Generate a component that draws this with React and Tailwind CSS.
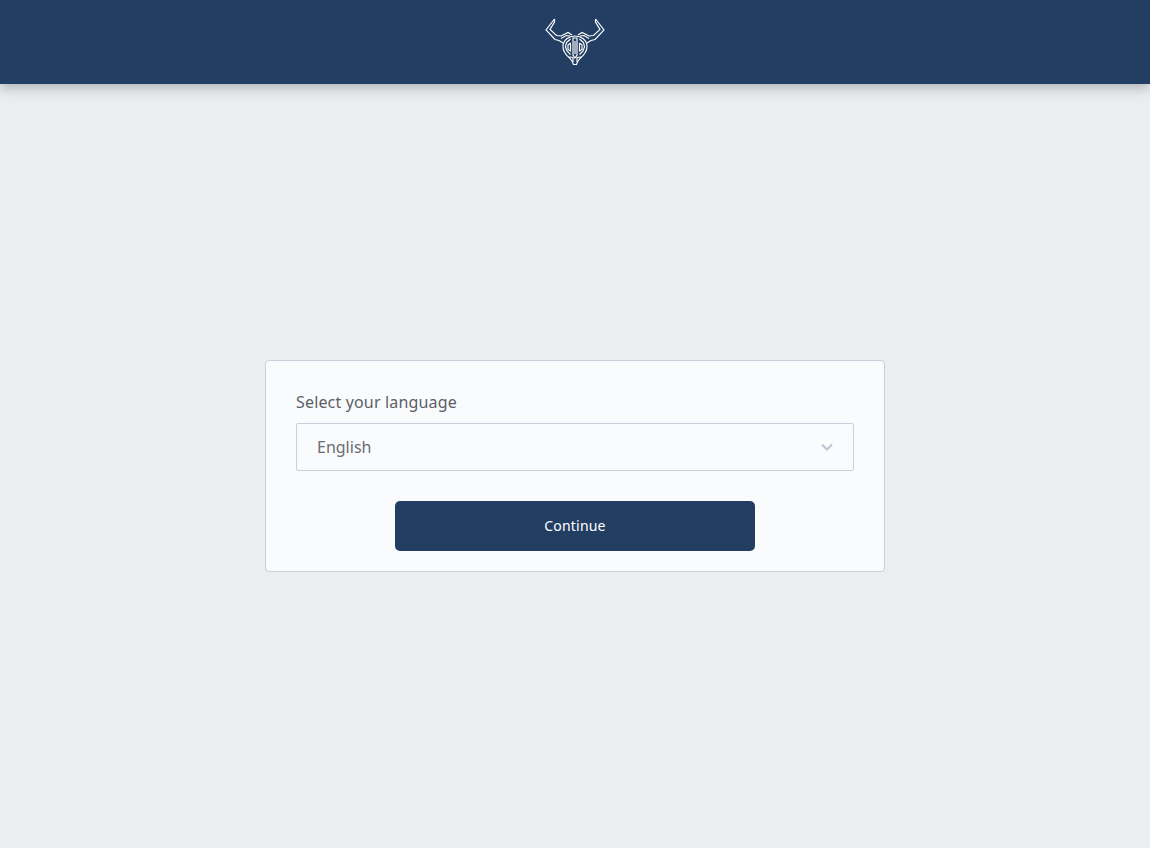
import React from "react";

function Logo() {
  return (
    <svg width="62" height="48" viewBox="0 0 62 48" fill="none" stroke="white" strokeWidth="1.15" strokeLinejoin="miter">
      {/* left horn */}
      <path d="M10.5 1 L2 12 L11 21.5 L15 22.5 L19 25" />
      <path d="M10.5 1 L10.5 4 L6 11.5 L12.5 17.5 L17 18 L24 14.5 L28 17" />
      <path d="M17 20.5 L22 17.5 L26 18" />
      {/* right horn */}
      <path d="M51.5 1 L60 12 L51 21.5 L47 22.5 L43 25" />
      <path d="M51.5 1 L51.5 4 L56 11.5 L49.5 17.5 L45 18 L38 14.5 L34 17" />
      <path d="M45 20.5 L40 17.5 L36 18" />
      {/* head */}
      <path d="M31 18 C25 18 19 22 19 28.5 C19 33 21.5 36.5 25 39.5 L28 43 L29.5 46.5 L32.5 46.5 L34 43 L37 39.5 C40.5 36.5 43 33 43 28.5 C43 22 37 18 31 18 Z" />
      {/* centre strands */}
      <path d="M29 20 L29 37 L31 40 L33 37 L33 20 Z" />
      <path d="M31 23 L31 36" />
      {/* lobes */}
      <path d="M26.5 21 L22.5 24.5 L21.5 29 L23 33 L26.5 36.5" />
      <path d="M35.5 21 L39.5 24.5 L40.5 29 L39 33 L35.5 36.5" />
      <path d="M26.5 25 L24 27 L24 31.5 L26.5 33 L26.5 25" />
      <path d="M35.5 25 L38 27 L38 31.5 L35.5 33 L35.5 25" />
      <path d="M25 39 L29 39.5 L29 44" />
      <path d="M37 39 L33 39.5 L33 44" />
    </svg>
  );
}

export default function App() {
  return (
    <div className="min-h-[848px] flex flex-col bg-[#eaeef1] font-['Noto_Sans','Open_Sans',sans-serif]">
      <header className="h-[84px] shrink-0 bg-[#233e63] flex items-center justify-center shadow-[0_4px_12px_rgba(0,0,0,0.25)]">
        <Logo />
      </header>
      <main className="flex-1 flex items-center justify-center">
        <div className="w-[620px] h-[212px] bg-[#f9fbfd] border border-[#c8d0da] rounded-[4px] px-[30px] pt-[30px] flex flex-col">
          <label className="text-base leading-[22px] tracking-[0.16px] text-[#5c5f66]">Select your language</label>
          <div className="mt-[10px] h-[48px] border border-[#c8d0da] rounded-[2px] flex items-center justify-between pl-[20px] pr-[19px]">
            <span className="text-base text-[#6a6d73]">English</span>
            <svg width="14" height="14" viewBox="0 0 14 14" fill="none" stroke="#bcc5d0" strokeWidth="2">
              <path d="M2 4.5 L7 9.5 L12 4.5" />
            </svg>
          </div>
          <button className="mt-[30px] mx-auto w-[360px] h-[50px] bg-[#233e63] text-white text-sm font-normal tracking-[0.2px] rounded-[5px]">
            Continue
          </button>
        </div>
      </main>
    </div>
  );
}
